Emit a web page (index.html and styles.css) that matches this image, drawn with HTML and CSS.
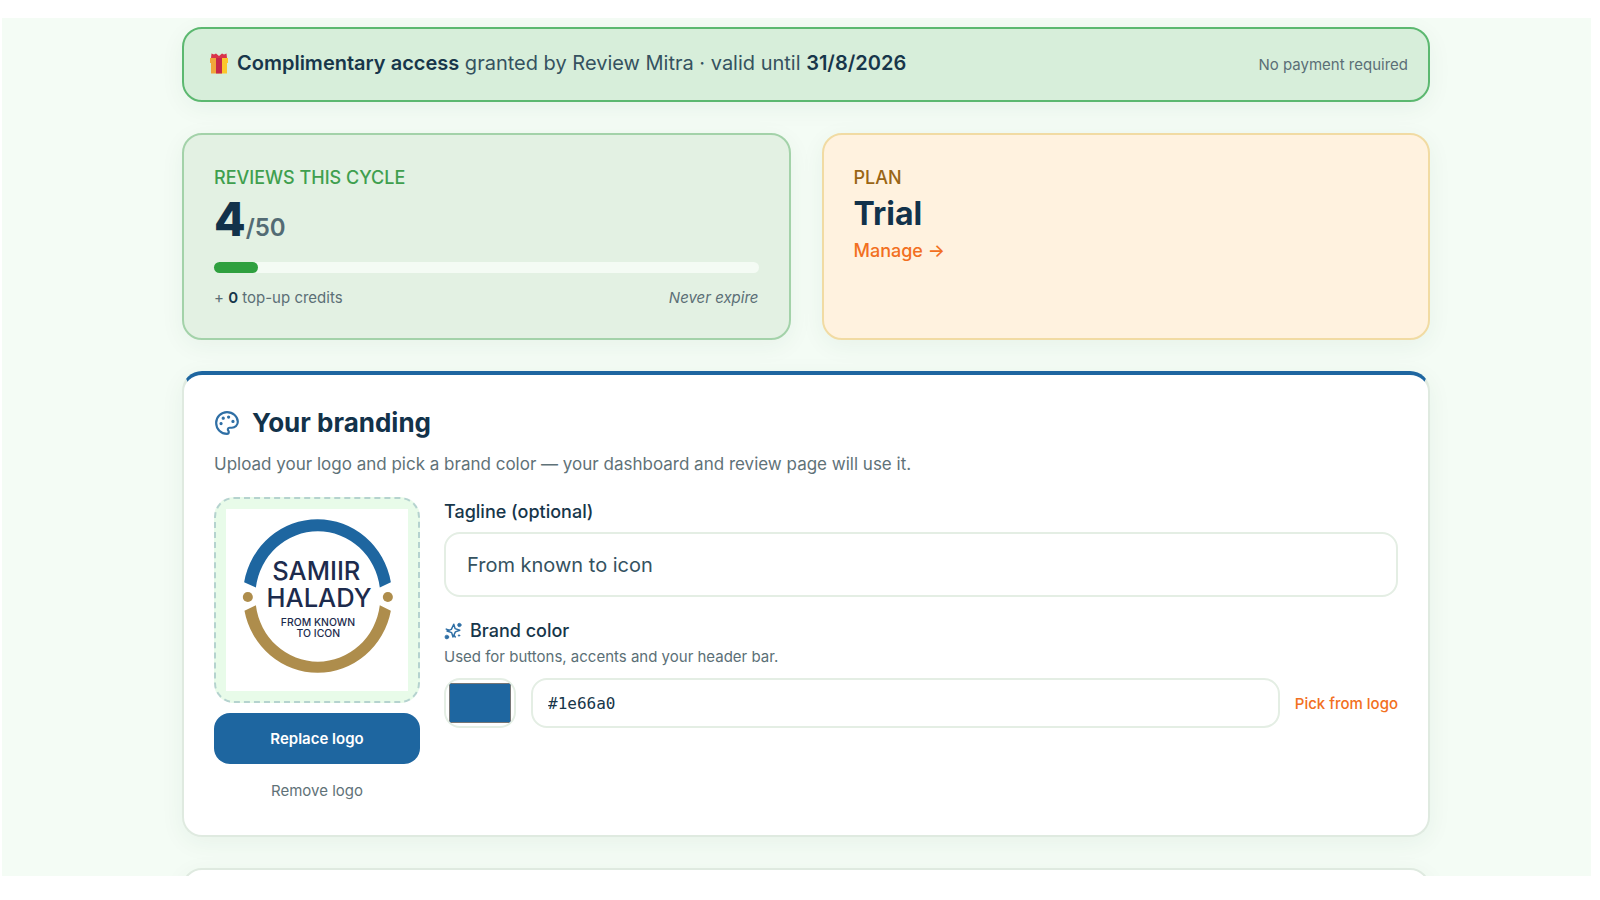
FILE: index.html
```html
<!DOCTYPE html>
<html lang="en">
<head>
<meta charset="utf-8">
<title>Review Mitra</title>
<link rel="stylesheet" href="styles.css">
</head>
<body>
<div class="viewport">
  <main class="page">
    <section class="card banner">
      <p class="banner-text">
        <svg class="gift" viewBox="0 0 18 21" aria-hidden="true">
          <path fill="#f0a63a" d="M0 5h9v5H0zM1 9h8v11.500H1z"/>
          <path fill="#fcc62c" d="M9 5h9v5H9zM9 9h8v11.500H9z"/>
          <path fill="#c6284a" d="M6 4.500h6v16H6z"/>
          <path fill="#d9334a" d="M1.500 0.500 4 1.500 6 .5 9 3l3-2.500 2 1 2.500-1L17 5H1z"/>
        </svg>
        <span><strong>Complimentary access</strong> granted by Review Mitra · valid until <strong>31/8/2026</strong></span>
      </p>
      <span class="small">No payment required</span>
    </section>

    <div class="stats">
      <section class="card usage">
        <h2 class="eyebrow">REVIEWS THIS CYCLE</h2>
        <p class="count">4<span class="count-total">/50</span></p>
        <div class="track" role="progressbar" aria-label="Reviews used" aria-valuenow="4" aria-valuemax="50"><div class="fill" style="width: 8%"></div></div>
        <p class="credits small"><span>+ <b>0</b> top-up credits</span><i>Never expire</i></p>
      </section>
      <section class="card plan">
        <h2 class="eyebrow">PLAN</h2>
        <p class="plan-name">Trial</p>
        <a class="manage" href="#plan">Manage →</a>
      </section>
    </div>

    <section class="card branding">
      <h2 class="title">
        <svg class="palette" viewBox="0 0 24 24" aria-hidden="true">
          <path d="M12 2C6.500 2 2 6.500 2 12s4.500 10 10 10c.926 0 1.648-.746 1.648-1.688 0-.437-.18-.835-.437-1.125-.29-.289-.438-.652-.438-1.125a1.640 1.640 0 0 1 1.668-1.668h1.996c3.051 0 5.555-2.503 5.555-5.554C21.965 6.012 17.461 2 12 2z"/>
          <circle class="dot" cx="13.500" cy="6.500" r="1"/><circle class="dot" cx="17.500" cy="10.500" r="1"/><circle class="dot" cx="8.500" cy="7.500" r="1"/><circle class="dot" cx="6.500" cy="12.500" r="1"/>
        </svg>
        Your branding
      </h2>
      <p class="lead">Upload your logo and pick a brand color — your dashboard and review page will use it.</p>

      <div class="brand-grid">
        <div class="logo-column">
          <div class="logo-frame">
            <svg class="logo" viewBox="-24 0 542 542" role="img" aria-label="Samiir Halady logo">
              <rect x="-24" y="0" width="542" height="542" fill="#fff"/>
              <path fill="#1e66a0" d="M30 218A222 228 0 0 1 467 218L434 234A186 192 0 0 0 65 234Z"/>
              <path fill="#ae8d4c" d="M31 303A222 228 0 0 0 467 303L434 287A186 192 0 0 1 65 287Z"/>
              <circle cx="41" cy="262" r="15" fill="#ae8d4c"/><circle cx="458" cy="262" r="15" fill="#ae8d4c"/>
              <g class="logo-text">
                <text x="245" y="211" font-size="76">SAMIIR</text>
                <text x="253" y="291" font-size="76">HALADY</text>
                <text x="250" y="349" font-size="31">FROM KNOWN</text>
                <text x="251" y="381" font-size="31">TO ICON</text>
              </g>
            </svg>
          </div>
          <button class="replace" type="button">Replace logo</button>
          <button class="remove" type="button">Remove logo</button>
        </div>

        <form class="fields">
          <label class="label" for="tagline">Tagline (optional)</label>
          <input class="input tagline" id="tagline" type="text" value="From known to icon">
          <label class="label color-label" for="hex">
            <svg class="sparkles" viewBox="0 0 24 24" aria-hidden="true">
              <path d="M13 3l1.800 5.800L21 11l-5.800 2.200L12 20l-1.800-5.800L4 12l5.800-2.200z"/>
              <path d="M3 9.500l3 1M15 20l-1.500-2"/>
              <circle class="dot" cx="20.500" cy="4" r="2.300"/><circle class="dot" cx="3.800" cy="20" r="2.500"/><circle class="dot" cx="20" cy="18" r="1"/>
            </svg>
            Brand color
          </label>
          <p class="small hint">Used for buttons, accents and your header bar.</p>
          <div class="color-row">
            <input class="swatch" type="color" value="#1e66a0" aria-label="Brand color swatch">
            <input class="input hex" id="hex" type="text" value="#1e66a0">
            <button class="pick" type="button">Pick from logo</button>
          </div>
        </form>
      </div>
    </section>

    <section class="card next"></section>
  </main>
</div>
</body>
</html>
```

FILE: styles.css
```css
* { box-sizing: border-box; }

body {
  margin: 0;
  height: 100vh;
  padding: 18px 9px 24px 2px;
  background: #fff;
  color: #17364a;
  font-family: Inter, "Liberation Sans", sans-serif;
  font-size: 18px;
}

h2, p { margin: 0; }
button, input { font: inherit; color: inherit; }
button { border: 0; background: none; padding: 0; cursor: pointer; }

.viewport {
  height: 100%;
  overflow: hidden;
  padding: 9px 0 0 19px;
  background: #f4fcf5;
}

.page {
  max-width: 1248px;
  margin: 0 auto;
  display: flex;
  flex-direction: column;
  gap: 31px;
}

.card {
  border: 2px solid #dfeae0;
  border-radius: 20px;
  padding: 30px;
  background: #fff;
  box-shadow: 0 6px 24px rgba(30, 90, 50, 0.06);
}

.small { font-size: 15px; line-height: 20px; color: #5b6f76; }

.banner {
  display: flex;
  align-items: center;
  justify-content: space-between;
  min-height: 75px;
  padding: 0 20px 0 26px;
  border-color: #5cb870;
  background: #d7eeda;
}
.banner-text { display: flex; align-items: center; gap: 9px; padding-bottom: 3px; font-size: 20px; line-height: 28px; color: #35525f; }
.banner-text strong { font-weight: 600; color: #17364a; }
.gift { width: 18px; height: 21px; }

.stats { display: grid; grid-template-columns: 1fr 1fr; gap: 31px; }
.usage { border-color: #a3d2a9; background: #e3f1e3; }
.plan { border-color: #f1dba3; background: #fff2df; }
.eyebrow { font-size: 18px; line-height: 26px; font-weight: 500; color: #3f9f4e; }
.plan .eyebrow { color: #996515; }
.count { font-size: 46px; line-height: 56px; font-weight: 800; color: #12324a; }
.count-total { font-size: 24px; font-weight: 600; color: #536b74; }
.track { height: 11px; margin-top: 6px; border-radius: 6px; background: #f4fbf4; }
.fill { height: 100%; border-radius: 6px; background: #2fa03f; }
.credits { display: flex; justify-content: space-between; margin-top: 15px; }
.credits b { font-weight: 600; color: #17364a; }
.plan-name { font-size: 32px; line-height: 46px; font-weight: 700; color: #12324a; }
.manage { display: inline-block; font-size: 18px; line-height: 28px; font-weight: 500; color: #f26f21; text-decoration: none; }

.branding { border-top: 4px solid #1e66a0; padding-bottom: 33px; }
.title { display: flex; align-items: center; gap: 12px; font-size: 26px; line-height: 36px; font-weight: 700; color: #12324a; }
.palette, .sparkles { fill: none; stroke: #2f6fa5; stroke-width: 2; stroke-linecap: round; stroke-linejoin: round; }
.palette { width: 26px; height: 26px; }
.sparkles { width: 18px; height: 18px; }
.dot { fill: #2f6fa5; stroke-width: 1; }
.lead { margin-top: 10px; font-size: 17px; line-height: 26px; color: #5f7278; }

.brand-grid { display: grid; grid-template-columns: 206px 1fr; gap: 24px; margin-top: 20px; }
.logo-column { display: flex; flex-direction: column; }
.logo-frame { padding: 10px; border: 2px dashed #b5d3cf; border-radius: 20px; background: #e8fbe9; }
.logo { display: block; width: 100%; }
.logo-text { font-family: Inter, sans-serif; font-weight: 500; fill: #1d2b4d; text-anchor: middle; }
.replace { height: 51px; margin-top: 10px; border-radius: 16px; background: #1e66a0; color: #fff; font-size: 15px; font-weight: 600; }
.remove { margin-top: 16px; font-size: 15px; line-height: 22px; color: #5f7278; }

.fields { display: flex; flex-direction: column; }
.label { font-size: 18px; line-height: 30px; font-weight: 500; color: #17364a; }
.input { min-width: 0; border: 2px solid #e4eee4; border-radius: 16px; background: #fff; outline: 0; }
.tagline { height: 65px; margin-top: 5px; padding: 0 21px; font-size: 20px; color: #35525f; }
.color-label { display: flex; align-items: center; gap: 8px; margin-top: 19px; }
.hint { margin-top: 1px; }
.color-row { display: flex; align-items: center; gap: 15px; margin-top: 11px; }
.swatch { appearance: none; width: 72px; height: 50px; padding: 3px; border: 2px solid #e4eee4; border-radius: 16px; background: #fff; }
.swatch::-webkit-color-swatch-wrapper { padding: 0; }
.swatch::-webkit-color-swatch { border: 1px solid #767676; border-radius: 0; }
.hex { flex: 1; height: 50px; padding: 0 15px; font-family: "DejaVu Sans Mono", monospace; font-size: 16px; }
.pick { font-size: 15px; font-weight: 500; color: #f26f21; }

.next { min-height: 200px; }
```
